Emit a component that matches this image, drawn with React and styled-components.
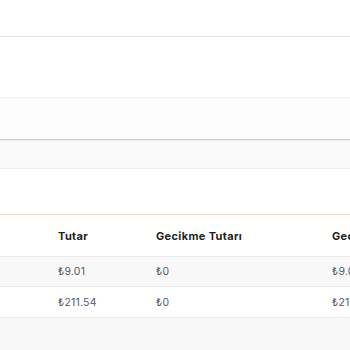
import React from "react";
import styled, { createGlobalStyle } from "styled-components";

const Global = createGlobalStyle`
  html, body { margin: 0; padding: 0; background: #ffffff; }
  body { font-family: "Inter", "Noto Sans", "DejaVu Sans", sans-serif; }
  #root { width: 350px; height: 350px; overflow: hidden; }
`;

const Page = styled.div`
  width: 350px;
  height: 350px;
  display: flex;
  flex-direction: column;
  overflow: hidden;
  background: #f8f8f8;
`;

const Band = styled.div`
  flex: none;
  height: ${(p) => p.$h}px;
  background: ${(p) => p.$bg || "#ffffff"};
  border-bottom: ${(p) => (p.$line ? `1px solid ${p.$line}` : "none")};
  box-shadow: ${(p) => p.$shadow || "none"};
`;

const Table = styled.div`
  flex: none;
  display: flex;
  flex-direction: column;
  border-top: 1px solid #ead9ca;
  background: #ffffff;
`;

const Row = styled.div`
  display: grid;
  grid-template-columns: 58px 98px 176px 200px;
  align-items: center;
  height: ${(p) => p.$h}px;
  background: ${(p) => p.$bg || "#ffffff"};
  border-bottom: 1px solid #ebebeb;
  white-space: nowrap;
  overflow: hidden;
`;

const HeadCell = styled.div`
  font-size: 11px;
  font-weight: 700;
  color: #1f1f1f;
  letter-spacing: 0.35px;
  overflow: hidden;
`;

const Cell = styled.div`
  font-size: 10.5px;
  font-weight: 400;
  color: #5a5a5a;
  letter-spacing: 0.2px;
  overflow: hidden;
`;

const rows = [
  { a: "₺9.01", b: "₺0", c: "₺9.01", bg: "#f8f8f9", h: 29 },
  { a: "₺211.54", b: "₺0", c: "₺211.54", bg: "#ffffff", h: 30 },
];

export default function App() {
  return (
    <Page>
      <Global />
      <Band $h={36} $line="#e6e6e6" />
      <Band $h={60} $line="#f1f1f1" />
      <Band $h={41} $bg="#fdfdfd" $line="#cfcfcf" />
      <Band $h={28} $bg="#fafafa" $line="#f0f0f0" $shadow="inset 0 3px 3px -2px rgba(0,0,0,0.08)" />
      <Band $h={45} />
      <Table>
        <Row $h={41}>
          <HeadCell />
          <HeadCell>Tutar</HeadCell>
          <HeadCell>Gecikme Tutarı</HeadCell>
          <HeadCell>Gecikme ile Tutar</HeadCell>
        </Row>
        {rows.map((r, i) => (
          <Row key={i} $h={r.h} $bg={r.bg}>
            <Cell />
            <Cell>{r.a}</Cell>
            <Cell>{r.b}</Cell>
            <Cell>{r.c}</Cell>
          </Row>
        ))}
      </Table>
    </Page>
  );
}
